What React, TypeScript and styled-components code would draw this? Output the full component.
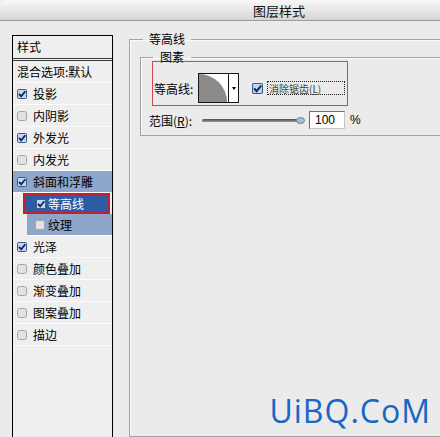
import React from "react";
import styled, { createGlobalStyle } from "styled-components";

type RowKind = "normal" | "active" | "current" | "sub";

interface StyleItem {
  label: string;
  checked: boolean;
  kind: RowKind;
}

const items: StyleItem[] = [
  { label: "投影", checked: true, kind: "normal" },
  { label: "内阴影", checked: false, kind: "normal" },
  { label: "外发光", checked: true, kind: "normal" },
  { label: "内发光", checked: false, kind: "normal" },
  { label: "斜面和浮雕", checked: true, kind: "active" },
  { label: "等高线", checked: true, kind: "current" },
  { label: "纹理", checked: false, kind: "sub" },
  { label: "光泽", checked: true, kind: "normal" },
  { label: "颜色叠加", checked: false, kind: "normal" },
  { label: "渐变叠加", checked: false, kind: "normal" },
  { label: "图案叠加", checked: false, kind: "normal" },
  { label: "描边", checked: false, kind: "normal" },
];

const GlobalStyle = createGlobalStyle`
  html, body {
    margin: 0;
    padding: 0;
    background: #ebebeb;
    overflow: hidden;
  }
`;

const Window = styled.div`
  position: relative;
  width: 440px;
  height: 437px;
  overflow: hidden;
  display: flex;
  flex-direction: column;
  background: #ebebeb;
  font-family: "Noto Sans CJK SC", "Liberation Sans", sans-serif;
  font-size: 12px;
  color: #000;
`;

const TitleBar = styled.div`
  height: 20px;
  flex-shrink: 0;
  display: flex;
  align-items: center;
  justify-content: center;
  padding-left: 118px;
  border-top-left-radius: 6px;
  border-bottom: 1px solid #9a9a9a;
  background: linear-gradient(#f8f8f8, #d6d6d6);
  font-size: 13px;
  color: #111;
`;

const Body = styled.div`
  flex: 1;
  min-height: 0;
  display: flex;
  gap: 16px;
  padding: 14px 0 0 12px;
`;

const Sidebar = styled.div`
  width: 99px;
  flex-shrink: 0;
  display: flex;
  flex-direction: column;
  border: 1px solid #000;
  border-bottom: none;
  background: #efefef;
`;

const SideHeader = styled.div`
  height: 22px;
  line-height: 22px;
  padding-left: 4px;
  border-bottom: 3px double #3a3a3a;
`;

const SideRow = styled.div<{ kind: RowKind }>`
  height: 21px;
  display: flex;
  align-items: center;
  gap: ${({ kind }) => (kind === "current" ? "2px" : kind === "sub" ? "3px" : "6px")};
  padding-left: ${({ kind }) => (kind === "current" ? "11px" : kind === "sub" ? "8px" : "4px")};
  margin-left: ${({ kind }) => (kind === "current" ? "10px" : kind === "sub" ? "14px" : "0")};
  margin-right: ${({ kind }) => (kind === "current" ? "2px" : "0")};
  border-bottom: 1px solid #fbfbfb;
  white-space: nowrap;
  background: ${({ kind }) =>
    kind === "active" || kind === "sub" ? "#8ea6c9" : kind === "current" ? "#2d5ba6" : "transparent"};
  color: ${({ kind }) => (kind === "current" ? "#fff" : "#000")};
  ${({ kind }) =>
    kind === "current" &&
    `
    height: 17px;
    border: 2px solid #c81e2c;
  `}
`;

const Box = styled.svg`
  flex-shrink: 0;
  display: block;
`;

const Main = styled.div`
  width: 330px;
  flex-shrink: 0;
  display: flex;
  flex-direction: column;
`;

// outer "等高线" group, runs past the cropped right and bottom edges
const Group = styled.fieldset`
  margin: -3px 0 0 0;
  padding: 4px 0 0 10px;
  height: 440px;
  border: 1px solid #a2a2a2;
  box-shadow: inset 1px 1px 0 #fafafa;
`;

const Legend = styled.legend`
  margin-left: 3px;
  padding: 0 6px;
  line-height: 14px;
  font-size: 12px;
`;

const SubGroup = styled.fieldset`
  width: 300px;
  margin: 0;
  padding: 0 8px 6px 8px;
  border: 1px solid #a2a2a2;
  box-shadow: inset 1px 1px 0 #fafafa;
`;

const SubLegend = styled.legend`
  margin-left: 4px;
  padding: 0 7px;
  line-height: 14px;
  font-size: 12px;
`;

const Highlight = styled.div`
  width: 196px;
  height: 45px;
  box-sizing: border-box;
  margin: -3px 0 0 3px;
  padding: 11px 0 2px 1px;
  display: flex;
  align-items: center;
  border: 1px solid #cc4a4c;
`;

const FieldLabel = styled.span`
  width: 44px;
  flex-shrink: 0;
  white-space: nowrap;
`;

const Contour = styled.div`
  width: 41px;
  height: 30px;
  box-sizing: border-box;
  display: flex;
  border: 1px solid #151515;
  background: #fff;
`;

const Thumb = styled.div`
  width: 29px;
  flex-shrink: 0;
  display: flex;
  align-items: flex-end;
  border-right: 1px solid #151515;
  overflow: hidden;
`;

const DropArrow = styled.div`
  flex: 1;
  display: flex;
  align-items: center;
  justify-content: center;
  &::after {
    content: "";
    border-left: 2.5px solid transparent;
    border-right: 2.5px solid transparent;
    border-top: 3px solid #000;
  }
`;

const AntiAlias = styled.div`
  display: flex;
  align-items: center;
  gap: 4px;
  margin-left: 13px;
`;

const FocusLabel = styled.span`
  width: 78px;
  height: 14px;
  box-sizing: border-box;
  display: flex;
  align-items: center;
  padding-left: 1px;
  border: 1px dotted #222;
  font-size: 10px;
  color: #444;
  white-space: nowrap;
`;

const RangeRow = styled.div`
  height: 18px;
  margin-top: 5px;
  display: flex;
  align-items: center;
`;

const RangeLabel = styled.span`
  width: 53px;
  flex-shrink: 0;
  white-space: nowrap;
`;

const Track = styled.div`
  position: relative;
  width: 98px;
  height: 3px;
  border-radius: 2px;
  background: linear-gradient(#4e4e4e, #9c9c9c);
`;

const Knob = styled.svg`
  position: absolute;
  right: -5px;
  top: -2px;
`;

const NumberBox = styled.div`
  width: 36px;
  height: 18px;
  box-sizing: border-box;
  margin-left: 9px;
  padding-left: 5px;
  display: flex;
  align-items: center;
  background: #fff;
  border: 1px solid #8a8a8a;
  border-color: #6f6f6f #c4c4c4 #c4c4c4 #6f6f6f;
  font-family: "Liberation Sans", sans-serif;
  font-size: 12px;
`;

const Unit = styled.span`
  margin-left: 5px;
  font-family: "Liberation Sans", sans-serif;
`;

const Watermark = styled.div`
  position: absolute;
  right: 9px;
  top: 395px;
  line-height: 32px;
  letter-spacing: 1px;
  font-family: "Open Sans", sans-serif;
  font-size: 32px;
  color: #1867c3;
`;

function CheckBox({ checked, size = 10 }: { checked: boolean; size?: number }) {
  return (
    <Box width={size} height={size} viewBox="0 0 10 10">
      {checked ? (
        <>
          <rect x="0.5" y="0.5" width="9" height="9" rx="1" fill="#c4d7ef" stroke="#3d5a86" />
          <path d="M2 4.8 L4.2 7.4 L8.3 2.3" fill="none" stroke="#0c285a" strokeWidth="1.8" />
        </>
      ) : (
        <rect x="0.5" y="0.5" width="9" height="9" rx="2" fill="#e2e2e2" stroke="#a4a4a4" />
      )}
    </Box>
  );
}

export default function App() {
  return (
    <>
      <GlobalStyle />
      <Window>
        <TitleBar>图层样式</TitleBar>
        <Body>
          <Sidebar>
            <SideHeader>样式</SideHeader>
            <SideRow kind="normal">混合选项:默认</SideRow>
            {items.map((it) => (
              <SideRow key={it.label} kind={it.kind}>
                <CheckBox checked={it.checked} />
                <span>{it.label}</span>
              </SideRow>
            ))}
          </Sidebar>

          <Main>
            <Group>
              <Legend>等高线</Legend>
              <SubGroup>
                <SubLegend>图素</SubLegend>
                <Highlight>
                  <FieldLabel>等高线:</FieldLabel>
                  <Contour>
                    <Thumb>
                      <svg width="28" height="28" viewBox="0 0 28 28">
                        <path d="M0 0 A28 28 0 0 1 28 28 L0 28 Z" fill="#8b8b8b" />
                      </svg>
                    </Thumb>
                    <DropArrow />
                  </Contour>
                  <AntiAlias>
                    <CheckBox checked size={11} />
                    <FocusLabel>
                      消除锯齿(<u>L</u>)
                    </FocusLabel>
                  </AntiAlias>
                </Highlight>
                <RangeRow>
                  <RangeLabel>
                    范围(<u>R</u>):
                  </RangeLabel>
                  <Track>
                    <Knob width="9" height="7" viewBox="0 0 9 7">
                      <ellipse cx="4.5" cy="3.5" rx="4" ry="3" fill="#a9bdd6" stroke="#6e7f96" />
                    </Knob>
                  </Track>
                  <NumberBox>100</NumberBox>
                  <Unit>%</Unit>
                </RangeRow>
              </SubGroup>
            </Group>
          </Main>
        </Body>
        <Watermark>UiBQ.CoM</Watermark>
      </Window>
    </>
  );
}
